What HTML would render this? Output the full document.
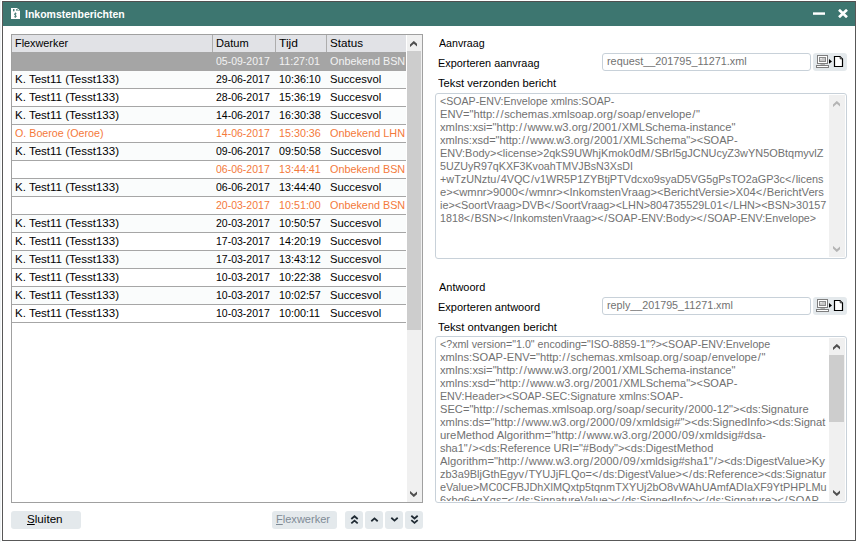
<!DOCTYPE html><html lang="nl"><head><meta charset="utf-8"><title>Inkomstenberichten</title><style>
*{box-sizing:border-box;margin:0;padding:0}
html,body{width:856px;height:542px;overflow:hidden;background:#fff}
body{font-family:"Liberation Sans",sans-serif;font-size:11px;color:#000;position:relative}
.a{position:absolute;white-space:nowrap}
#win{position:absolute;left:2px;top:1px;width:854px;height:540px;border:1px solid #585858;border-top-color:#505050;background:#fff}
#tb{position:absolute;left:3px;top:2px;width:852px;height:24px;background:#3d7670}
#grid{position:absolute;left:11px;top:34px;width:412px;height:469px;border:1px solid #a0a0a0;background:#fff}
#hdr{position:absolute;left:12px;top:35px;width:394px;height:17px;background:#e1e2e6}
.hs{position:absolute;top:35px;width:1px;height:17px;background:#adadad}
.row{position:absolute;left:12px;width:394px;height:18px;border-bottom:1px solid #a6a6a6;background:#fff}
.row.alt{background:#fafcfc}
.row.sel{background:#a5a5a5;border-bottom-color:#a5a5a5}
.t{position:absolute;white-space:pre;font-size:11px;line-height:12px;height:12px;transform-origin:0 0}
.t i{font-style:normal;margin:0 0.7px}
.inp{position:absolute;border:1px solid #c8d1d9;border-radius:3px;background:#fff}
.ta{position:absolute;border:1px solid #c8d1d9;border-radius:3px;background:#fff}
.btn{position:absolute;background:#e4e9ec;border-radius:3px}
.sb{position:absolute;background:#f0f0f0}
.th{position:absolute;background:#cdcdcd}
</style></head><body>
<div class="a" style="left:0;top:0;width:1px;height:542px;background:#eef2f4"></div><div id="win"></div><div id="tb"></div>
<svg class="a" style="left:11px;top:8px" width="9" height="11" viewBox="0 0 9 11"><path d="M0 0H6.3L9 2.7V11H0z" fill="#fff"/><path d="M6.5 0.3V2.5H8.7" fill="#e6efee" stroke="#5d8d88" stroke-width="0.6"/><rect x="2" y="1" width="1.5" height="2.3" fill="#4f837d"/><rect x="5" y="1" width="1.2" height="1.7" fill="#6b9792"/><path d="M5.5 5.7C4.4 4.9 3.1 5.5 3.5 6.5S5.6 7.3 5.3 8.4S3.6 9 3 8.3M4.4 4.6V9.6" fill="none" stroke="#3d7670" stroke-width="0.9"/></svg>
<svg class="a" style="left:813px;top:11px" width="12" height="5" viewBox="0 0 12 5"><rect x="0" y="1.35" width="12" height="2.45" fill="#fff"/></svg>
<svg class="a" style="left:838px;top:9px" width="10" height="9" viewBox="0 0 10 9"><path d="M1 0.8L9 8.2M9 0.8L1 8.2" stroke="#fff" stroke-width="2.7" fill="none"/></svg>
<div id="grid"></div><div id="hdr"></div>
<div class="hs" style="left:212px"></div>
<div class="hs" style="left:275px"></div>
<div class="hs" style="left:326px"></div>
<div class="row sel" style="top:52px;height:19px"></div>
<div class="row alt" style="top:71px"></div>
<div class="row" style="top:89px"></div>
<div class="row alt" style="top:107px"></div>
<div class="row" style="top:125px"></div>
<div class="row alt" style="top:143px"></div>
<div class="row" style="top:161px"></div>
<div class="row alt" style="top:179px"></div>
<div class="row" style="top:197px"></div>
<div class="row alt" style="top:215px"></div>
<div class="row" style="top:233px"></div>
<div class="row alt" style="top:251px"></div>
<div class="row" style="top:269px"></div>
<div class="row alt" style="top:287px"></div>
<div class="row" style="top:305px"></div>
<div class="sb" style="left:407px;top:35px;width:15px;height:467px"></div>
<div class="th" style="left:407px;top:51px;width:14px;height:279px"></div>
<svg class="a" style="left:409.8px;top:41.0px" width="7.6" height="6" viewBox="0 0 7.6 6"><polygon points="0,3.4 3.8,-0.1 7.6,3.4 7.6,6.1 3.8,2.8 0,6.1" fill="#505050"/></svg>
<svg class="a" style="left:409.8px;top:491.0px" width="7.6" height="6" viewBox="0 0 7.6 6"><polygon points="0,-0.1 3.8,3.2 7.6,-0.1 7.6,2.6 3.8,6.1 0,2.6" fill="#505050"/></svg>
<div class="btn" style="left:11px;top:511px;width:70px;height:18px"></div>
<div class="btn" style="left:272px;top:511px;width:65px;height:18px"></div>
<div class="btn" style="left:345px;top:511px;width:18px;height:18px"></div>
<svg class="a" style="left:350px;top:514px" width="9" height="12" viewBox="0 0 9 12"><path d="M1.3 5L4.5 2.2L7.7 5M1.3 9.4L4.5 6.6L7.7 9.4" stroke="#1f2a33" stroke-width="1.8" fill="none"/></svg>
<div class="btn" style="left:365px;top:511px;width:18px;height:18px"></div>
<svg class="a" style="left:370px;top:514px" width="9" height="12" viewBox="0 0 9 12"><path d="M1.3 7.2L4.5 4.4L7.7 7.2" stroke="#1f2a33" stroke-width="1.8" fill="none"/></svg>
<div class="btn" style="left:385px;top:511px;width:18px;height:18px"></div>
<svg class="a" style="left:390px;top:514px" width="9" height="12" viewBox="0 0 9 12"><path d="M1.3 3.8L4.5 6.6L7.7 3.8" stroke="#1f2a33" stroke-width="1.8" fill="none"/></svg>
<div class="btn" style="left:405px;top:511px;width:18px;height:18px"></div>
<svg class="a" style="left:410px;top:514px" width="9" height="12" viewBox="0 0 9 12"><path d="M1.3 1.7L4.5 4.5L7.7 1.7M1.3 6.1L4.5 8.9L7.7 6.1" stroke="#1f2a33" stroke-width="1.8" fill="none"/></svg>
<div class="inp" style="left:602px;top:53px;width:209px;height:18px"></div>
<div class="btn" style="left:813px;top:53px;width:34px;height:18px"></div><svg class="a" style="left:813px;top:53px" width="34" height="18" viewBox="0 0 34 18"><rect x="4.5" y="2.5" width="10" height="8" fill="#fff" stroke="#7e7e7e"/><rect x="6.5" y="4.5" width="6" height="4" fill="#c8c8c8" stroke="#8a8a8a"/><rect x="7.3" y="5.2" width="1.4" height="1" fill="#fff"/><rect x="7.5" y="11" width="4.5" height="1" fill="#b4b4b4"/><rect x="3.5" y="12.5" width="12" height="2" fill="#fff" stroke="#7e7e7e"/><path d="M16 6L19 8.4L16 10.8z" fill="#000"/><path d="M21.5 3.5H27L29.5 6V13.5H21.5z" fill="#fff" stroke="#000" stroke-width="1.2"/><path d="M27.2 3.8V5.8H29.2" fill="#fff" stroke="#000" stroke-width="0.8"/></svg>
<div class="ta" style="left:435px;top:93px;width:412px;height:166px"></div>
<div class="sb" style="left:829px;top:95px;width:16px;height:162px"></div>
<svg class="a" style="left:832.8px;top:101.0px" width="7.6" height="6" viewBox="0 0 7.6 6"><polygon points="0,3.4 3.8,-0.1 7.6,3.4 7.6,6.1 3.8,2.8 0,6.1" fill="#b4b4b4"/></svg>
<svg class="a" style="left:832.8px;top:245.9px" width="7.6" height="6" viewBox="0 0 7.6 6"><polygon points="0,-0.1 3.8,3.2 7.6,-0.1 7.6,2.6 3.8,6.1 0,2.6" fill="#b4b4b4"/></svg>
<div class="inp" style="left:602px;top:297px;width:209px;height:18px"></div>
<div class="btn" style="left:813px;top:297px;width:34px;height:18px"></div><svg class="a" style="left:813px;top:297px" width="34" height="18" viewBox="0 0 34 18"><rect x="4.5" y="2.5" width="10" height="8" fill="#fff" stroke="#7e7e7e"/><rect x="6.5" y="4.5" width="6" height="4" fill="#c8c8c8" stroke="#8a8a8a"/><rect x="7.3" y="5.2" width="1.4" height="1" fill="#fff"/><rect x="7.5" y="11" width="4.5" height="1" fill="#b4b4b4"/><rect x="3.5" y="12.5" width="12" height="2" fill="#fff" stroke="#7e7e7e"/><path d="M16 6L19 8.4L16 10.8z" fill="#000"/><path d="M21.5 3.5H27L29.5 6V13.5H21.5z" fill="#fff" stroke="#000" stroke-width="1.2"/><path d="M27.2 3.8V5.8H29.2" fill="#fff" stroke="#000" stroke-width="0.8"/></svg>
<div class="ta" style="left:435px;top:336px;width:412px;height:167px"></div>
<div class="sb" style="left:829px;top:338px;width:16px;height:163px"></div>
<div class="th" style="left:829px;top:355px;width:15px;height:67px"></div>
<svg class="a" style="left:832.8px;top:344.0px" width="7.6" height="6" viewBox="0 0 7.6 6"><polygon points="0,3.4 3.8,-0.1 7.6,3.4 7.6,6.1 3.8,2.8 0,6.1" fill="#505050"/></svg>
<svg class="a" style="left:832.8px;top:489.9px" width="7.6" height="6" viewBox="0 0 7.6 6"><polygon points="0,-0.1 3.8,3.2 7.6,-0.1 7.6,2.6 3.8,6.1 0,2.6" fill="#505050"/></svg>
<div class="t" style="left:25px;top:8px;transform:scaleX(0.9543);color:#fff;font-weight:bold">Inkomstenberichten</div>
<div class="t" style="left:15px;top:37px;transform:scaleX(0.9860)">Flexwerker</div>
<div class="t" style="left:216px;top:37px;transform:scaleX(1.0079)">Datum</div>
<div class="t" style="left:279px;top:37px;transform:scaleX(1.0896)">Tijd</div>
<div class="t" style="left:330px;top:37px;transform:scaleX(1.0569)">Status</div>
<div class="t" style="left:216px;top:55px;transform:scaleX(0.9552);color:#f3f3f3">05-09-2017</div>
<div class="t" style="left:279px;top:55px;transform:scaleX(0.9765);color:#f3f3f3">11:27:01</div>
<div class="t" style="left:330px;top:55px;transform:scaleX(0.9834);color:#f3f3f3">Onbekend BSN</div>
<div class="t" style="left:15px;top:73px;transform:scaleX(1.0482)">K. Test11 (Tesst133)</div>
<div class="t" style="left:216px;top:73px;transform:scaleX(0.9552)">29-06-2017</div>
<div class="t" style="left:279px;top:73px;transform:scaleX(0.9765)">10:36:10</div>
<div class="t" style="left:330px;top:73px;transform:scaleX(1.0202)">Succesvol</div>
<div class="t" style="left:15px;top:91px;transform:scaleX(1.0482)">K. Test11 (Tesst133)</div>
<div class="t" style="left:216px;top:91px;transform:scaleX(0.9552)">28-06-2017</div>
<div class="t" style="left:279px;top:91px;transform:scaleX(0.9765)">15:36:19</div>
<div class="t" style="left:330px;top:91px;transform:scaleX(1.0202)">Succesvol</div>
<div class="t" style="left:15px;top:109px;transform:scaleX(1.0482)">K. Test11 (Tesst133)</div>
<div class="t" style="left:216px;top:109px;transform:scaleX(0.9552)">14-06-2017</div>
<div class="t" style="left:279px;top:109px;transform:scaleX(0.9765)">16:30:38</div>
<div class="t" style="left:330px;top:109px;transform:scaleX(1.0202)">Succesvol</div>
<div class="t" style="left:15px;top:127px;transform:scaleX(0.9724);color:#f4793b">O. Boeroe (Oeroe)</div>
<div class="t" style="left:216px;top:127px;transform:scaleX(0.9552);color:#f4793b">14-06-2017</div>
<div class="t" style="left:279px;top:127px;transform:scaleX(0.9765);color:#f4793b">15:30:36</div>
<div class="t" style="left:330px;top:127px;transform:scaleX(0.9900);color:#f4793b">Onbekend LHN</div>
<div class="t" style="left:15px;top:145px;transform:scaleX(1.0482)">K. Test11 (Tesst133)</div>
<div class="t" style="left:216px;top:145px;transform:scaleX(0.9552)">09-06-2017</div>
<div class="t" style="left:279px;top:145px;transform:scaleX(0.9765)">09:50:58</div>
<div class="t" style="left:330px;top:145px;transform:scaleX(1.0202)">Succesvol</div>
<div class="t" style="left:216px;top:163px;transform:scaleX(0.9552);color:#f4793b">06-06-2017</div>
<div class="t" style="left:279px;top:163px;transform:scaleX(0.9765);color:#f4793b">13:44:41</div>
<div class="t" style="left:330px;top:163px;transform:scaleX(0.9834);color:#f4793b">Onbekend BSN</div>
<div class="t" style="left:15px;top:181px;transform:scaleX(1.0482)">K. Test11 (Tesst133)</div>
<div class="t" style="left:216px;top:181px;transform:scaleX(0.9552)">06-06-2017</div>
<div class="t" style="left:279px;top:181px;transform:scaleX(0.9765)">13:44:40</div>
<div class="t" style="left:330px;top:181px;transform:scaleX(1.0202)">Succesvol</div>
<div class="t" style="left:216px;top:199px;transform:scaleX(0.9552);color:#f4793b">20-03-2017</div>
<div class="t" style="left:279px;top:199px;transform:scaleX(0.9765);color:#f4793b">10:51:00</div>
<div class="t" style="left:330px;top:199px;transform:scaleX(0.9834);color:#f4793b">Onbekend BSN</div>
<div class="t" style="left:15px;top:217px;transform:scaleX(1.0482)">K. Test11 (Tesst133)</div>
<div class="t" style="left:216px;top:217px;transform:scaleX(0.9552)">20-03-2017</div>
<div class="t" style="left:279px;top:217px;transform:scaleX(0.9765)">10:50:57</div>
<div class="t" style="left:330px;top:217px;transform:scaleX(1.0202)">Succesvol</div>
<div class="t" style="left:15px;top:235px;transform:scaleX(1.0482)">K. Test11 (Tesst133)</div>
<div class="t" style="left:216px;top:235px;transform:scaleX(0.9552)">17-03-2017</div>
<div class="t" style="left:279px;top:235px;transform:scaleX(0.9765)">14:20:19</div>
<div class="t" style="left:330px;top:235px;transform:scaleX(1.0202)">Succesvol</div>
<div class="t" style="left:15px;top:253px;transform:scaleX(1.0482)">K. Test11 (Tesst133)</div>
<div class="t" style="left:216px;top:253px;transform:scaleX(0.9552)">17-03-2017</div>
<div class="t" style="left:279px;top:253px;transform:scaleX(0.9765)">13:43:12</div>
<div class="t" style="left:330px;top:253px;transform:scaleX(1.0202)">Succesvol</div>
<div class="t" style="left:15px;top:271px;transform:scaleX(1.0482)">K. Test11 (Tesst133)</div>
<div class="t" style="left:216px;top:271px;transform:scaleX(0.9552)">10-03-2017</div>
<div class="t" style="left:279px;top:271px;transform:scaleX(0.9765)">10:22:38</div>
<div class="t" style="left:330px;top:271px;transform:scaleX(1.0202)">Succesvol</div>
<div class="t" style="left:15px;top:289px;transform:scaleX(1.0482)">K. Test11 (Tesst133)</div>
<div class="t" style="left:216px;top:289px;transform:scaleX(0.9552)">10-03-2017</div>
<div class="t" style="left:279px;top:289px;transform:scaleX(0.9765)">10:02:57</div>
<div class="t" style="left:330px;top:289px;transform:scaleX(1.0202)">Succesvol</div>
<div class="t" style="left:15px;top:307px;transform:scaleX(1.0482)">K. Test11 (Tesst133)</div>
<div class="t" style="left:216px;top:307px;transform:scaleX(0.9552)">10-03-2017</div>
<div class="t" style="left:279px;top:307px;transform:scaleX(0.9765)">10:00:11</div>
<div class="t" style="left:330px;top:307px;transform:scaleX(1.0202)">Succesvol</div>
<div class="t" style="left:27px;top:513px;transform:scaleX(1.0576)"><u>S</u>luiten</div>
<div class="t" style="left:276px;top:513px;transform:scaleX(1.0047);color:#7f8b96"><u>F</u>lexwerker</div>
<div class="t" style="left:439px;top:37px;transform:scaleX(0.9677)">Aanvraag</div>
<div class="t" style="left:438px;top:57px;transform:scaleX(0.9877)">Exporteren aanvraag</div>
<div class="t" style="left:438px;top:77px;transform:scaleX(1.0172)">Tekst verzonden bericht</div>
<div class="t" style="left:439px;top:281px;transform:scaleX(0.9945)">Antwoord</div>
<div class="t" style="left:438px;top:301px;transform:scaleX(1.0000)">Exporteren antwoord</div>
<div class="t" style="left:438px;top:321px;transform:scaleX(1.0237)">Tekst ontvangen bericht</div>
<div class="t" style="left:607px;top:55px;transform:scaleX(0.9858);color:#727272">request__201795_11271.xml</div>
<div class="t" style="left:607px;top:299px;transform:scaleX(0.9766);color:#727272">reply__201795_11271.xml</div>
<div class="t" style="left:440px;top:95px;transform:scaleX(0.9640);color:#717171">&lt;SOAP-ENV:Envelope xmlns:SOAP-</div>
<div class="t" style="left:440px;top:108px;transform:scaleX(1.0157);color:#717171">ENV="http:<i>/</i><i>/</i>schemas.xmlsoap.org<i>/</i>soap<i>/</i>envelope<i>/</i>"</div>
<div class="t" style="left:440px;top:121px;transform:scaleX(1.0187);color:#717171">xmlns:xsi="http:<i>/</i><i>/</i>www.w3.org<i>/</i>2001<i>/</i>XMLSchema-instance"</div>
<div class="t" style="left:440px;top:134px;transform:scaleX(1.0049);color:#717171">xmlns:xsd="http:<i>/</i><i>/</i>www.w3.org<i>/</i>2001<i>/</i>XMLSchema"&gt;&lt;SOAP-</div>
<div class="t" style="left:440px;top:147px;transform:scaleX(0.9935);color:#717171">ENV:Body&gt;&lt;license&gt;2qkS9UWhjKmok0dM<i>/</i>SBrl5gJCNUcyZ3wYN5OBtqmyvlZ</div>
<div class="t" style="left:440px;top:160px;transform:scaleX(0.9709);color:#717171">5UZUyR97qKXF3KvoahTMVJBsN3XsDI</div>
<div class="t" style="left:440px;top:173px;transform:scaleX(0.9852);color:#717171">+wTzUNztu<i>/</i>4VQC<i>/</i>v1WR5P1ZYBtjPTVdcxo9syaD5VG5gPsTO2aGP3c&lt;<i>/</i>licens</div>
<div class="t" style="left:440px;top:186px;transform:scaleX(1.0162);color:#717171">e&gt;&lt;wmnr&gt;9000&lt;<i>/</i>wmnr&gt;&lt;InkomstenVraag&gt;&lt;BerichtVersie&gt;X04&lt;<i>/</i>BerichtVers</div>
<div class="t" style="left:440px;top:199px;transform:scaleX(0.9858);color:#717171">ie&gt;&lt;SoortVraag&gt;DVB&lt;<i>/</i>SoortVraag&gt;&lt;LHN&gt;804735529L01&lt;<i>/</i>LHN&gt;&lt;BSN&gt;30157</div>
<div class="t" style="left:440px;top:212px;transform:scaleX(0.9746);color:#717171">1818&lt;<i>/</i>BSN&gt;&lt;<i>/</i>InkomstenVraag&gt;&lt;<i>/</i>SOAP-ENV:Body&gt;&lt;<i>/</i>SOAP-ENV:Envelope&gt;</div>
<div class="t" style="left:440px;top:338px;transform:scaleX(0.9687);color:#717171">&lt;?xml version="1.0" encoding="ISO-8859-1"?&gt;&lt;SOAP-ENV:Envelope</div>
<div class="t" style="left:440px;top:351px;transform:scaleX(1.0106);color:#717171">xmlns:SOAP-ENV="http:<i>/</i><i>/</i>schemas.xmlsoap.org<i>/</i>soap<i>/</i>envelope<i>/</i>"</div>
<div class="t" style="left:440px;top:364px;transform:scaleX(1.0190);color:#717171">xmlns:xsi="http:<i>/</i><i>/</i>www.w3.org<i>/</i>2001<i>/</i>XMLSchema-instance"</div>
<div class="t" style="left:440px;top:377px;transform:scaleX(1.0042);color:#717171">xmlns:xsd="http:<i>/</i><i>/</i>www.w3.org<i>/</i>2001<i>/</i>XMLSchema"&gt;&lt;SOAP-</div>
<div class="t" style="left:440px;top:390px;transform:scaleX(0.9710);color:#717171">ENV:Header&gt;&lt;SOAP-SEC:Signature xmlns:SOAP-</div>
<div class="t" style="left:440px;top:403px;transform:scaleX(1.0120);color:#717171">SEC="http:<i>/</i><i>/</i>schemas.xmlsoap.org<i>/</i>soap<i>/</i>security<i>/</i>2000-12"&gt;&lt;ds:Signature</div>
<div class="t" style="left:440px;top:416px;transform:scaleX(1.0155);color:#717171">xmlns:ds="http:<i>/</i><i>/</i>www.w3.org<i>/</i>2000<i>/</i>09<i>/</i>xmldsig#"&gt;&lt;ds:SignedInfo&gt;&lt;ds:Signat</div>
<div class="t" style="left:440px;top:429px;transform:scaleX(1.0302);color:#717171">ureMethod Algorithm="http:<i>/</i><i>/</i>www.w3.org<i>/</i>2000<i>/</i>09<i>/</i>xmldsig#dsa-</div>
<div class="t" style="left:440px;top:442px;transform:scaleX(1.0002);color:#717171">sha1"<i>/</i>&gt;&lt;ds:Reference URI="#Body"&gt;&lt;ds:DigestMethod</div>
<div class="t" style="left:440px;top:455px;transform:scaleX(1.0200);color:#717171">Algorithm="http:<i>/</i><i>/</i>www.w3.org<i>/</i>2000<i>/</i>09<i>/</i>xmldsig#sha1"<i>/</i>&gt;&lt;ds:DigestValue&gt;Ky</div>
<div class="t" style="left:440px;top:468px;transform:scaleX(0.9950);color:#717171">zb3a9BljGthEgyv<i>/</i>TYUJjFLQo=&lt;<i>/</i>ds:DigestValue&gt;&lt;<i>/</i>ds:Reference&gt;&lt;ds:Signatur</div>
<div class="t" style="left:440px;top:481px;transform:scaleX(0.9873);color:#717171">eValue&gt;MC0CFBJDhXlMQxtp5tqnmTXYUj2bO8vWAhUAmfADIaXF9YtPHPLMu</div>
<div class="t" style="left:440px;top:494px;transform:scaleX(0.9987);color:#717171;height:7px;overflow:hidden">6xbq6+gXgs=&lt;<i>/</i>ds:SignatureValue&gt;&lt;<i>/</i>ds:SignedInfo&gt;&lt;<i>/</i>ds:Signature&gt;&lt;<i>/</i>SOAP-</div>
</body></html>
